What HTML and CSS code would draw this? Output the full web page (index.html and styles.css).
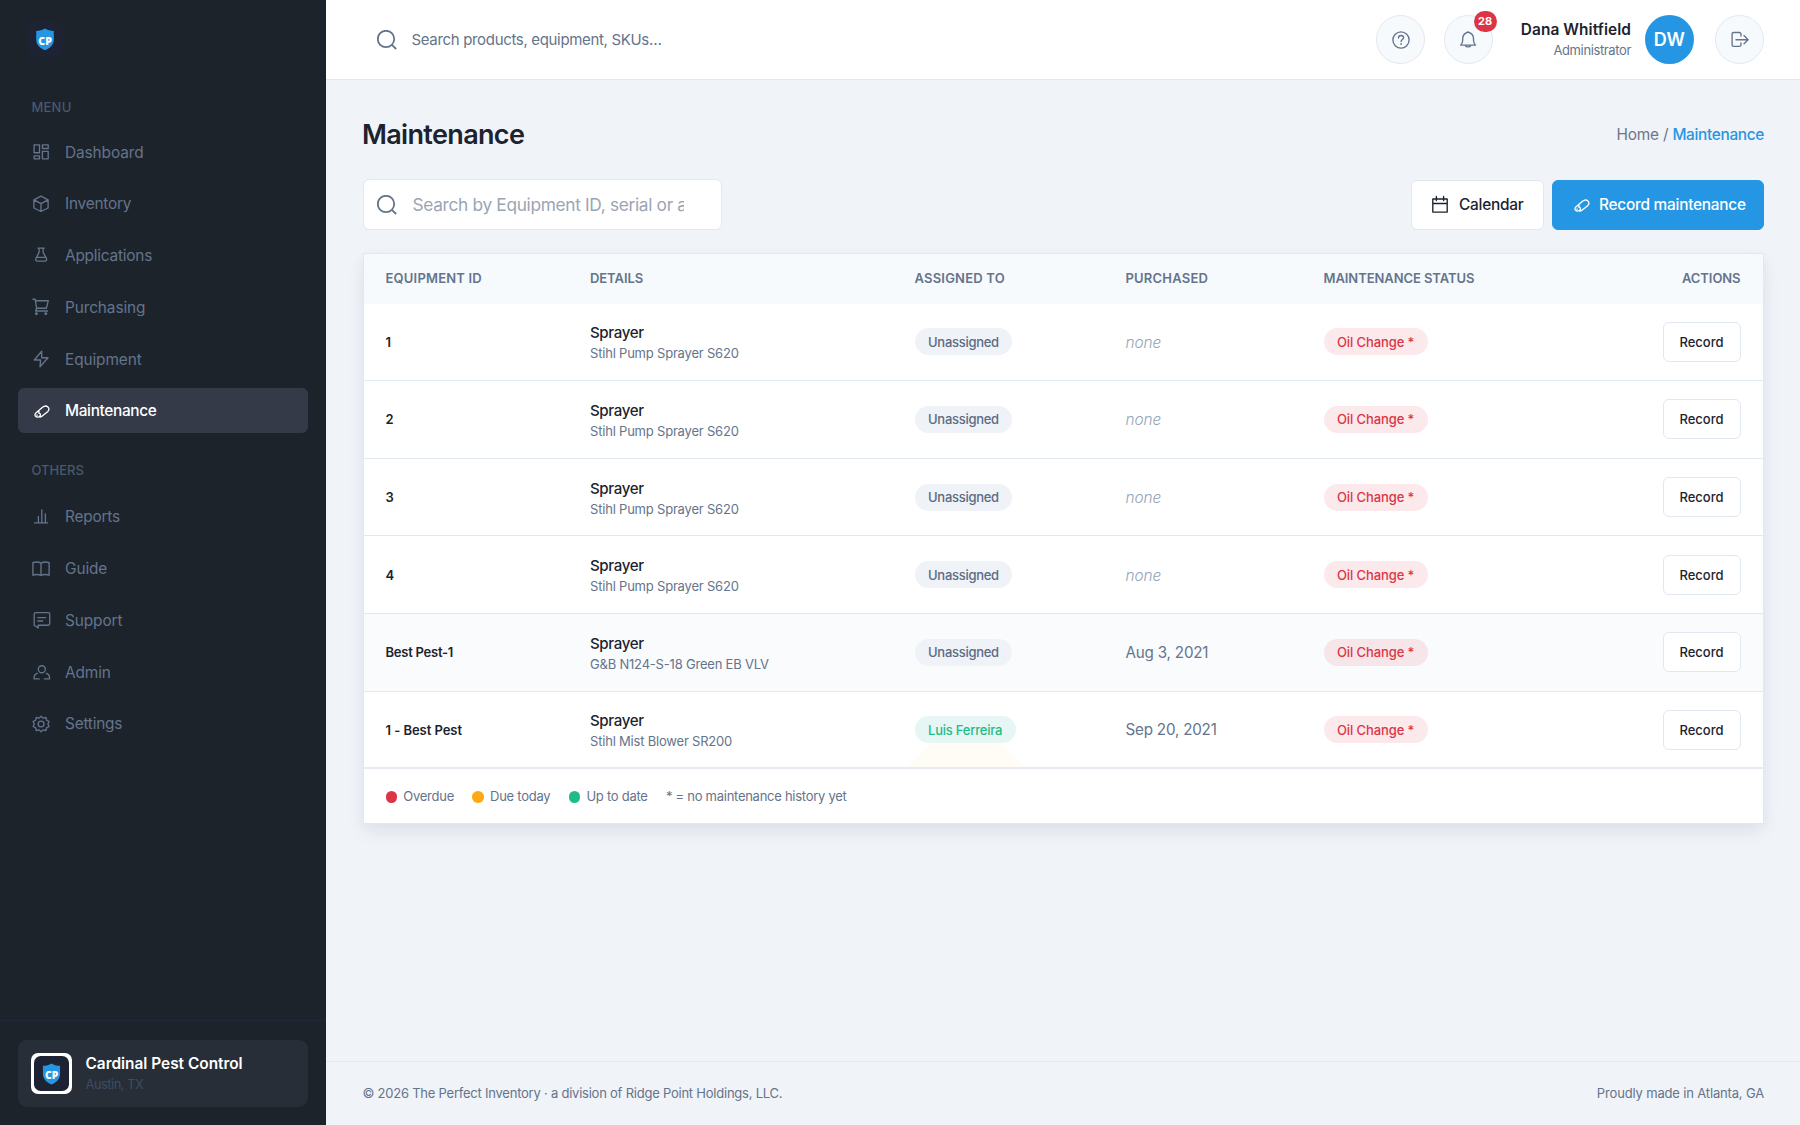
FILE: index.html
```html
<!DOCTYPE html>
<html lang="en">
<head>
<meta charset="utf-8">
<title>Maintenance</title>
<link rel="stylesheet" href="styles.css">
</head>
<body>
<svg class="sprite" aria-hidden="true">
  <symbol id="wrench" viewBox="0 0 18 18"><path d="M4.100 14.700c-1.500-.8-1.500-2.500-.2-3.700l6.600-5.700c1.700-1.400 4-1.600 5.400-.4 1.500 1.300 1.300 3.400-.3 4.800l-5.700 4.600c-.7.600-1.500.800-2.300.800M6.900 8.900v2.300c1.600.4 2 1.700 1.100 2.700-1 1.100-2.600 1.500-3.900.8M4.800 13.100h.5"/></symbol>
  <symbol id="search" viewBox="0 0 20 20"><circle cx="9" cy="9" r="8.200"/><path d="M14.800 14.800l4.400 4.200"/></symbol>
</svg>
<div class="app">
  <aside class="sidebar">
    <div class="brand"><svg width="36" height="36" viewBox="0 0 36 36"><rect width="36" height="36" rx="7" fill="#1d2333"/><path d="M18 7.600c2.500 1.500 5.500 2.300 8.800 2.500v8.600c0 4.900-4 8.700-8.800 10.600-4.800-1.900-8.800-5.700-8.800-10.600v-8.600c3.300-.2 6.300-1 8.800-2.500z" fill="#2596e3"/><text x="11.300" y="23.600" textLength="13.600" lengthAdjust="spacingAndGlyphs" class="mark">CP</text></svg></div>
    <nav class="nav">
      <h3 class="nav-title">MENU</h3>
      <a class="item"><svg class="ico" viewBox="0 0 18 18"><path d="M2.100 1.900h5.400v7.800H2.100zM2.100 12.900h5.400v2.900H2.100zM10.400 1.900h5.800v3.600h-5.800zM10.400 8.300h5.800v7.500h-5.800z"/></svg>Dashboard</a>
      <a class="item tight"><svg class="ico" viewBox="0 0 18 18"><path d="M9 1.200l7.100 3.700V13L9 16.500 1.900 13V4.900zM1.900 4.900L9 8.600l7.100-3.700M9 8.600v7.900"/></svg>Inventory</a>
      <a class="item tight"><svg class="ico" viewBox="0 0 18 18"><path d="M5.900 1.100h6.400M7.100 1.100v4.300L4 11.200c-.8 1.700.2 2.900 1.500 2.900h7.300c1.300 0 2.300-1.200 1.500-2.900l-3.200-5.800V1.100M4.400 10.300h9.500"/></svg>Applications</a>
      <a class="item"><svg class="ico" viewBox="0 0 18 18"><path d="M.9 1.200h2.200l1.500 9h9.800l1.900-7.500H3.400M4.600 10.200l-1 2.800h12"/><circle cx="4.400" cy="15.700" r=".8"/><circle cx="13.800" cy="15.700" r=".8"/></svg>Purchasing</a>
      <a class="item"><svg class="ico" viewBox="0 0 18 18"><path d="M9.700 1.200L2.300 10h6.300L8 16.700l8-9h-6.300z"/></svg>Equipment</a>
      <a class="item active"><svg class="ico"><use href="#wrench"/></svg>Maintenance</a>
      <h3 class="nav-title others">OTHERS</h3>
      <a class="item tight"><svg class="ico" viewBox="0 0 18 18"><path d="M2.500 14.900h13M6.400 14.500V8.400M9.800 14.500V1.900M13.400 14.500V6"/></svg>Reports</a>
      <a class="item"><svg class="ico" viewBox="0 0 18 18"><path d="M9 3.100C6.700 1.800 3.400 1.800.9 2.600v12.600c2.500-.8 5.800-.8 8.100.2 2.300-1 5.600-1 8.100-.2V2.600C14.600 1.800 11.300 1.800 9 3.100zV15"/></svg>Guide</a>
      <a class="item"><svg class="ico" viewBox="0 0 18 18"><path d="M3.600 1.600h12.700c.9 0 1.400.5 1.400 1.400v9.800c0 .9-.5 1.400-1.400 1.400H6.200V17l-4-2.800V3c0-.9.500-1.400 1.400-1.400zM5.800 6.600h7.800M5.800 10h4.900"/></svg>Support</a>
      <a class="item"><svg class="ico" viewBox="0 0 18 18"><circle cx="9.800" cy="6.200" r="3.500"/><path d="M7.200 15.900H2.100v-1.700c0-1.900 1.300-3.300 3.100-3.900M12.400 15.900h5.100v-1.700c0-1.900-1.300-3.300-3.100-3.900"/></svg>Admin</a>
      <a class="item tight"><svg class="ico" viewBox="0 0 18 18"><circle cx="9.100" cy="9" r="2.900"/><path d="M9.100 1.100l1.900 2 3-.6.500 2.700 2.600 1.300L15.900 9l1.200 2.500-2.600 1.300-.5 2.700-3-.6-1.900 2-1.900-2-3 .6-.5-2.700-2.600-1.300L2.300 9 1.100 6.500l2.600-1.300.5-2.700 3 .6z"/></svg>Settings</a>
    </nav>
    <div class="org-wrap">
      <div class="org">
        <span class="org-logo"><svg width="35" height="35" viewBox="0 0 36 36"><rect width="36" height="36" rx="7" fill="#1d2333"/><path d="M18 7.600c2.500 1.500 5.500 2.300 8.800 2.500v8.600c0 4.900-4 8.700-8.800 10.600-4.800-1.900-8.800-5.700-8.800-10.600v-8.600c3.300-.2 6.300-1 8.800-2.500z" fill="#2596e3"/><text x="11.300" y="23.600" textLength="13.600" lengthAdjust="spacingAndGlyphs" class="mark">CP</text></svg></span>
        <div><div class="org-name">Cardinal Pest Control</div><div class="org-place">Austin, TX</div></div>
      </div>
    </div>
  </aside>
  <div class="main">
    <header class="topbar">
      <div class="find"><svg class="glass"><use href="#search"/></svg><input placeholder="Search products, equipment, SKUs…"></div>
      <div class="tools">
        <button class="round"><svg class="ico" viewBox="0 0 18 18"><circle cx="9" cy="9" r="8.100"/><path d="M6.500 7.100c0-1.600 1.100-2.600 2.600-2.600s2.500 1 2.500 2.200c0 1.800-2.500 1.900-2.500 3.700M9.100 12.500v.9"/></svg></button>
        <button class="round bell"><svg class="ico" viewBox="0 0 18 18"><path d="M1.700 14.100h14.800c-1.400-1.600-2-2.300-2-4.900V7.500C14.500 4.300 12.200 2.100 9.100 1 6 2.100 3.700 4.300 3.700 7.500v1.700c0 2.600-.6 3.300-2 4.900zM6.300 14.200c.7 2.300 4.900 2.300 5.600 0"/></svg><span class="badge">28</span></button>
        <div class="who"><div class="who-name">Dana Whitfield</div><div class="who-role">Administrator</div></div>
        <span class="avatar">DW</span>
        <button class="round"><svg class="ico" viewBox="0 0 18 18"><path d="M10 5V3.100c0-1-.6-1.600-1.600-1.600H2.700c-1 0-1.600.6-1.600 1.600v10.700c0 1 .6 1.600 1.600 1.600h5.700c1 0 1.600-.6 1.600-1.600v-1.900M5 8.700h12M13 4.600l4.100 4.100-4.100 4.100"/></svg></button>
      </div>
    </header>
    <main class="content">
      <div class="head"><h1>Maintenance</h1><div class="crumbs">Home / <b>Maintenance</b></div></div>
      <div class="bar">
        <div class="search"><svg class="glass"><use href="#search"/></svg><input placeholder="Search by Equipment ID, serial or assignee"></div>
        <div class="acts">
          <button class="btn"><svg class="ico" viewBox="0 0 18 18"><path d="M1.800 3h14.400v13.100H1.800zM1.800 7.500h14.400M5.400.5v4M12.600.5v4"/></svg>Calendar</button>
          <button class="btn primary"><svg class="ico"><use href="#wrench"/></svg>Record maintenance</button>
        </div>
      </div>
      <section class="card">
        <div class="row thead"><span class="h-wide">EQUIPMENT ID</span><span>DETAILS</span><span class="h-wide">ASSIGNED TO</span><span class="h-wide">PURCHASED</span><span>MAINTENANCE STATUS</span><span class="right">ACTIONS</span></div>
        <div class="row"><span class="id">1</span><div><div class="kind">Sprayer</div><div class="model">Stihl Pump Sprayer S620</div></div><div><span class="pill">Unassigned</span></div><em class="none">none</em><div><span class="pill due">Oil Change *</span></div><div class="right"><button class="rec">Record</button></div></div>
        <div class="row"><span class="id">2</span><div><div class="kind">Sprayer</div><div class="model">Stihl Pump Sprayer S620</div></div><div><span class="pill">Unassigned</span></div><em class="none">none</em><div><span class="pill due">Oil Change *</span></div><div class="right"><button class="rec">Record</button></div></div>
        <div class="row"><span class="id">3</span><div><div class="kind">Sprayer</div><div class="model">Stihl Pump Sprayer S620</div></div><div><span class="pill">Unassigned</span></div><em class="none">none</em><div><span class="pill due">Oil Change *</span></div><div class="right"><button class="rec">Record</button></div></div>
        <div class="row"><span class="id">4</span><div><div class="kind">Sprayer</div><div class="model">Stihl Pump Sprayer S620</div></div><div><span class="pill">Unassigned</span></div><em class="none">none</em><div><span class="pill due">Oil Change *</span></div><div class="right"><button class="rec">Record</button></div></div>
        <div class="row lit"><span class="id">Best Pest-1</span><div><div class="kind">Sprayer</div><div class="model">G&amp;B N124-S-18 Green EB VLV</div></div><div><span class="pill">Unassigned</span></div><span class="date">Aug 3, 2021</span><div><span class="pill due">Oil Change *</span></div><div class="right"><button class="rec">Record</button></div></div>
        <div class="row last"><span class="id id-wide">1 - Best Pest</span><div><div class="kind">Sprayer</div><div class="model">Stihl Mist Blower SR200</div></div><div class="glow"><span class="pill ok">Luis Ferreira</span></div><span class="date">Sep 20, 2021</span><div><span class="pill due">Oil Change *</span></div><div class="right"><button class="rec">Record</button></div></div>
        <div class="legend"><span><i class="dot red"></i>Overdue</span><span><i class="dot amber"></i>Due today</span><span><i class="dot green"></i>Up to date</span><span class="note">* = no maintenance history yet</span></div>
      </section>
    </main>
    <footer class="foot"><span>© 2026 The Perfect Inventory · a division of Ridge Point Holdings, LLC.</span><span class="made">Proudly made in Atlanta, GA</span></footer>
  </div>
</div>
</body>
</html>
```
FILE: styles.css
```css
* { box-sizing: border-box; }
body { margin: 0; font-family: Inter, "Liberation Sans", sans-serif; color: #1c232e; background: #f0f3f8; -webkit-font-smoothing: antialiased; }
h1, h3 { margin: 0; }
button { font: inherit; color: inherit; padding: 0; }
input { border: 0; outline: 0; background: none; padding: 0; font-family: inherit; min-width: 0; }
.sprite { position: absolute; width: 0; height: 0; }
.mark { font: 800 10.800px "Open Sans", sans-serif; fill: #fff; stroke: none; }
.ico { width: 18px; height: 18px; flex: none; fill: none; stroke: currentColor; stroke-width: 1.350; stroke-linejoin: round; stroke-linecap: round; overflow: visible; }
.glass { width: 20px; height: 20px; flex: none; fill: none; stroke: #64748b; stroke-width: 1.800; overflow: visible; }

.app { display: flex; height: 1125px; overflow: hidden; }
.sidebar { width: 326px; flex: none; background: #1c232b; display: flex; flex-direction: column; color: #64748b; }
.brand { padding: 21px 27px 0; height: 97px; }
.brand svg { display: block; }
.nav { flex: 1; padding: 0 18px; }
.nav-title { font-size: 13px; font-weight: 500; line-height: 20px; color: #4a596d; padding-left: 13.500px; margin-bottom: 12.500px; letter-spacing: .2px; }
.others { margin-top: 27px; margin-bottom: 14px; letter-spacing: 0; }
.item { display: flex; align-items: center; gap: 15px; height: 45px; margin-bottom: 6.750px; padding-left: 14px; border-radius: 6px; font-size: 15.400px; letter-spacing: -.1px; }
.item.tight { letter-spacing: -.22px; }
.item.active { background: #343a48; color: #fff; font-weight: 500; letter-spacing: -.34px; }
.org-wrap { border-top: 1px solid #202737; padding: 18.500px 18px 18px; height: 105px; }
.org { background: #272e37; border-radius: 9px; height: 67px; display: flex; align-items: center; gap: 13.500px; padding: 0 13px; }
.org-logo { width: 41px; height: 41px; background: #fff; border-radius: 7px; display: grid; place-items: center; }
.org-logo svg { display: block; }
.org-name { color: #fff; font-weight: 600; font-size: 15.400px; line-height: 20px; padding-top: 1px; }
.org-place { color: #3e4c62; font-size: 13px; line-height: 20px; letter-spacing: -.550px; }

.main { flex: 1; display: flex; flex-direction: column; }
.topbar { height: 80px; background: #fff; border-bottom: 1px solid #e2e8f0; display: flex; justify-content: space-between; align-items: center; padding: 0 36px 0 51px; }
.find { display: flex; align-items: center; gap: 14.500px; }
.find input { width: 400px; font-size: 15px; letter-spacing: -.330px; color: #64748b; }
.find input::placeholder { color: #64748b; opacity: 1; }
.tools { display: flex; align-items: center; }
.round { width: 49px; height: 49px; border-radius: 50%; background: #f7fafd; border: 1px solid #e2e8f0; display: grid; place-items: center; color: #64748b; }
.bell { margin-left: 18.500px; position: relative; }
.badge { position: absolute; left: 29px; top: -5px; width: 23px; height: 21px; border-radius: 11px; background: #dc3545; color: #fff; font-size: 11px; font-weight: 700; line-height: 21px; text-align: center; }
.who { margin-left: 29px; width: 109.500px; text-align: right; white-space: nowrap; display: flex; flex-direction: column; align-items: flex-end; }
.who-name { font-weight: 600; font-size: 15.400px; line-height: 20px; letter-spacing: .080px; padding-top: 1px; }
.who-role { font-size: 13px; line-height: 20px; color: #64748b; letter-spacing: -.370px; }
.avatar { margin: 0 21px 0 13.500px; width: 49.500px; height: 49.500px; border-radius: 50%; background: #2596e3; color: #fff; display: grid; place-items: center; font-size: 18px; font-weight: 600; }

.content { flex: 1; padding: 31px 36px 0 36.500px; }
.head { display: flex; justify-content: space-between; align-items: center; height: 46px; }
h1 { font-size: 27px; font-weight: 600; letter-spacing: -.660px; margin-left: -.5px; }
.crumbs { font-size: 15.400px; letter-spacing: -.190px; color: #6b7789; }
.crumbs b { color: #2596e3; font-weight: 500; letter-spacing: -.330px; }
.bar { display: flex; justify-content: space-between; align-items: center; margin-top: 22px; height: 51px; }
.search { width: 359px; height: 51px; border: 1px solid #e2e8f0; border-radius: 6px; background: #fff; display: flex; align-items: center; gap: 15.500px; padding-left: 13.500px; }
.search input { width: 271px; font-size: 17.300px; letter-spacing: -.320px; }
.search input::placeholder { color: #9aa5b4; opacity: 1; }
.acts { display: flex; gap: 8px; }
.btn { height: 50px; border: 1px solid #e2e8f0; border-radius: 6px; background: #fff; display: flex; align-items: center; gap: 10px; padding: 0 0 0 19px; font-size: 15.400px; font-weight: 500; letter-spacing: -.240px; width: 133px; white-space: nowrap; }
.primary { background: #2596e3; border-color: #2596e3; color: #fff; width: 212px; gap: 9px; }

.card { margin-top: 23px; border: 1px solid #e2e8f0; background: #fff; box-shadow: 0 9px 18px -2px rgba(30, 50, 80, .080), 0 3px 12px rgba(30, 50, 80, .030); }
.row { display: grid; grid-template-columns: 204.500px 324.500px 211px 198px 1fr 122px; align-items: center; padding: 0 22px; height: 77.650px; border-bottom: 1px solid #e2e8f0; white-space: nowrap; }
.row.last { border-bottom: 2px solid #e6ebf2; }
.row.lit { background: #fafbfd; }
.row.thead { height: 49.500px; border: 0; background: #f7fafd; color: #64748b; font-size: 13px; font-weight: 600; letter-spacing: -.070px; padding-bottom: 1px; }
.row.thead .h-wide { letter-spacing: .200px; }
.right { text-align: right; padding-right: .5px; }
.id { font-size: 13px; font-weight: 600; letter-spacing: -.250px; }
.id-wide { letter-spacing: -.050px; }
.kind { font-size: 15.100px; font-weight: 500; line-height: 20px; letter-spacing: -.380px; padding-top: 3px; }
.model { font-size: 13px; line-height: 20px; color: #64748b; letter-spacing: -.200px; }
.pill { display: inline-flex; align-items: center; height: 27px; border-radius: 14px; padding: 0 13.500px; background: #eff2f7; color: #5b6b82; font-size: 13px; font-weight: 500; letter-spacing: -.280px; vertical-align: middle; position: relative; }
.due { background: #fbe9eb; color: #dc3545; letter-spacing: -.100px; }
.lit .due { background: #f6e5e9; }
.ok { background: #e6f6f5; color: #1fbb87; letter-spacing: -.220px; }
.none { font-size: 15.400px; color: #94a3b8; letter-spacing: -.100px; font-weight: 300; padding-top: 1px; }
.date { font-size: 15.200px; color: #64748b; letter-spacing: -.200px; }
.rec { width: 78px; height: 40px; border: 1px solid #e2e8f0; border-radius: 6px; background: #fff; font-size: 13px; font-weight: 500; }
.glow { align-self: stretch; display: flex; align-items: center; position: relative; }
.glow::before { content: ""; position: absolute; left: -7px; bottom: 0; width: 117px; height: 37px; background: #fffbf5; clip-path: polygon(32% 0, 68% 0, 100% 100%, 0 100%); }
.legend { height: 54px; display: flex; align-items: center; gap: 18.300px; padding: 0 22px; font-size: 13px; color: #64748b; letter-spacing: -.260px; }
.legend span { display: flex; align-items: center; gap: 6.300px; }
.legend .note { letter-spacing: -.270px; }
.dot { width: 11.500px; height: 11.500px; border-radius: 50%; margin-top: 1px; }
.red { background: #dc3545; } .amber { background: #ffa912; } .green { background: #20bb87; }

.foot { height: 64px; border-top: 1px solid #e2e8f0; display: flex; justify-content: space-between; align-items: center; padding: 0 36px 1px 36.500px; font-size: 13px; color: #64748b; letter-spacing: -.230px; }
.made { letter-spacing: -.160px; }
```
